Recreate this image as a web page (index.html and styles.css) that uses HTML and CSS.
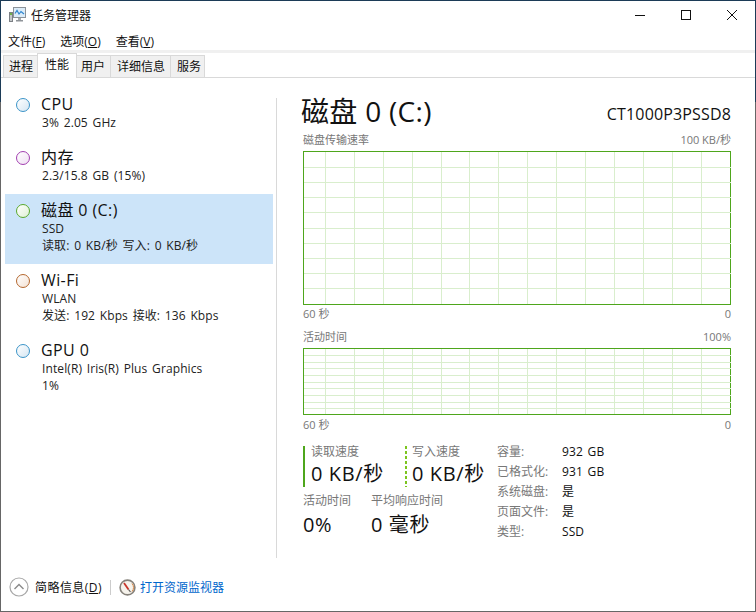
FILE: index.html
```html
<!DOCTYPE html>
<html lang="zh-CN">
<head>
<meta charset="utf-8">
<title>任务管理器</title>
<link rel="stylesheet" href="styles.css">
</head>
<body>
<div class="window">
  <header class="titlebar">
    <svg class="appicon" width="18" height="16" viewBox="0 0 18 16">
      <rect x="0.5" y="5.5" width="3" height="9" fill="#c4c8ca" stroke="#7c8085"/>
      <rect x="1" y="6" width="2" height="2" fill="#6fb04a"/>
      <rect x="4.5" y="0.5" width="12" height="10" fill="#dcecf8" stroke="#8b9299"/>
      <path d="M6 6.5 L8 3.5 L10 7 L12 4.5 L15 7" fill="none" stroke="#2e86d0" stroke-width="1.2"/>
      <rect x="9" y="11" width="3" height="2" fill="#a6abaf"/>
      <rect x="7" y="13" width="7" height="1.5" fill="#8f9499"/>
    </svg>
    <span class="title">任务管理器</span>
    <div class="winbtns">
      <svg width="46" height="16" viewBox="0 0 46 16"><path d="M18 8.5H28" stroke="#111"/></svg>
      <svg width="46" height="16" viewBox="0 0 46 16"><rect x="18.5" y="3.5" width="9" height="9" fill="none" stroke="#111"/></svg>
      <svg width="46" height="16" viewBox="0 0 46 16"><path d="M18 3L28 13M28 3L18 13" stroke="#111" fill="none"/></svg>
    </div>
  </header>
  <nav class="menubar">
    <span>文件(<u>F</u>)</span><span>选项(<u>O</u>)</span><span>查看(<u>V</u>)</span>
  </nav>
  <div class="tabs">
    <span class="tab">进程</span><span class="tab active">性能</span><span class="tab tab-users">用户</span><span class="tab tab-details">详细信息</span><span class="tab tab-services">服务</span>
  </div>
  <main class="content">
    <aside class="sidebar">
      <div class="item short">
        <i class="dot blue"></i>
        <div><div class="name">CPU</div><div class="sub">3% 2.05 GHz</div></div>
      </div>
      <div class="item short">
        <i class="dot purple"></i>
        <div><div class="name">内存</div><div class="sub">2.3/15.8 GB (15%)</div></div>
      </div>
      <div class="item selected">
        <i class="dot green"></i>
        <div><div class="name">磁盘 0 (C:)</div><div class="sub">SSD</div><div class="sub">读取: 0 KB/秒 写入: 0 KB/秒</div></div>
      </div>
      <div class="item">
        <i class="dot orange"></i>
        <div><div class="name">Wi-Fi</div><div class="sub">WLAN</div><div class="sub">发送: 192 Kbps 接收: 136 Kbps</div></div>
      </div>
      <div class="item">
        <i class="dot blue"></i>
        <div><div class="name">GPU 0</div><div class="sub">Intel(R) Iris(R) Plus Graphics</div><div class="sub">1%</div></div>
      </div>
    </aside>
    <div class="divider"></div>
    <section class="detail">
      <div class="heading"><h1>磁盘 0 (C:)</h1><span class="model">CT1000P3PSSD8</span></div>
      <div class="caption cap1"><span>磁盘传输速率</span><span>100 KB/秒</span></div>
      <div class="chart chart-big">
        <svg class="grid" width="427" height="152" viewBox="0 0 427 152">
          <path d="M21.5 0V152M50.5 0V152M79.5 0V152M108.5 0V152M137.5 0V152M165.5 0V152M194.5 0V152M223.5 0V152M252.5 0V152M281.5 0V152M310.5 0V152M339.5 0V152M368.5 0V152M397.5 0V152M0 15.5H427M0 30.5H427M0 45.5H427M0 60.5H427M0 76.5H427M0 91.5H427M0 106.5H427M0 121.5H427M0 136.5H427" fill="none" stroke="#d9eecd"/>
        </svg>
      </div>
      <div class="caption cap-b1"><span>60 秒</span><span>0</span></div>
      <div class="caption cap2"><span>活动时间</span><span>100%</span></div>
      <div class="chart chart-small">
        <svg class="grid" width="427" height="65" viewBox="0 0 427 65">
          <path d="M21.5 0V65M50.5 0V65M79.5 0V65M108.5 0V65M137.5 0V65M165.5 0V65M194.5 0V65M223.5 0V65M252.5 0V65M281.5 0V65M310.5 0V65M339.5 0V65M368.5 0V65M397.5 0V65M0 6.5H427M0 13.5H427M0 19.5H427M0 26.5H427M0 33.5H427M0 39.5H427M0 46.5H427M0 53.5H427M0 59.5H427" fill="none" stroke="#d9eecd"/>
        </svg>
      </div>
      <div class="caption cap-b2"><span>60 秒</span><span>0</span></div>
      <div class="stats">
        <div class="stat-left">
          <div class="speeds">
            <div class="speed read"><div class="label">读取速度</div><div class="value">0 KB/秒</div></div>
            <div class="speed write"><div class="label">写入速度</div><div class="value">0 KB/秒</div></div>
          </div>
          <div class="speeds lower">
            <div class="metric m1"><div class="label">活动时间</div><div class="value">0%</div></div>
            <div class="metric"><div class="label">平均响应时间</div><div class="value">0 毫秒</div></div>
          </div>
        </div>
        <dl class="props">
          <dt>容量:</dt><dd>932 GB</dd>
          <dt>已格式化:</dt><dd>931 GB</dd>
          <dt>系统磁盘:</dt><dd>是</dd>
          <dt>页面文件:</dt><dd>是</dd>
          <dt>类型:</dt><dd>SSD</dd>
        </dl>
      </div>
    </section>
  </main>
  <footer class="footer">
    <svg class="chev" width="20" height="20" viewBox="0 0 20 20"><circle cx="10" cy="10" r="9" fill="#fff" stroke="#a8a8a8" stroke-width="1.2"/><path d="M5.5 12L10 7.5L14.5 12" fill="none" stroke="#8a8a8a" stroke-width="1.4"/></svg>
    <span class="brief">简略信息(<u>D</u>)</span>
    <span class="sep"></span>
    <svg class="gauge" width="17" height="17" viewBox="0 0 17 17"><circle cx="8.5" cy="8.5" r="7.4" fill="#f6f3ec" stroke="#85817a" stroke-width="1.6"/><path d="M13 4.5A6 6 0 0 1 13 12.5" fill="none" stroke="#d98a4a" stroke-width="1"/><path d="M5 4L9.5 10.5" stroke="#c8352a" stroke-width="1.8"/><path d="M9.5 10.5L11.5 13" stroke="#555" stroke-width="1.2"/></svg>
    <span class="link">打开资源监视器</span>
  </footer>
</div>
</body>
</html>
```
FILE: styles.css
```css
* { box-sizing: border-box; }
html, body { margin: 0; padding: 0; }
body {
  width: 756px; height: 612px; overflow: hidden; background: #fff;
  font-family: "Open Sans", "Noto Sans CJK SC", sans-serif;
  font-size: 12px; color: #111;
}
.window {
  width: 756px; height: 612px; display: flex; flex-direction: column;
  border: 1px solid #666;
  border-image: linear-gradient(#1c3b57 0, #1c3b57 102px, #666 102px) 1;
  background: #fff;
}
.titlebar { height: 28px; display: flex; align-items: center; padding-left: 8px; flex: none; }
.appicon { margin-right: 4px; }
.title { font-size: 12px; flex: 1; }
.winbtns { display: flex; align-items: center; }
.menubar { height: 21px; display: flex; gap: 15px; padding: 3px 7px 0; align-items: center; flex: none; }
.tabs { height: 28px; flex: none; display: flex; align-items: flex-end; padding-left: 2px; border-top: 3px solid #f0f0f0; border-bottom: 1px solid #d9d9d9; }
.tab { height: 22px; padding: 0 4px 0 5px; line-height: 21px; background: #f0f0f0; border: 1px solid #d9d9d9; border-bottom: none; margin-left: -1px; font-size: 12px; }
.tab:first-child { margin-left: 0; }
.tab-users { padding: 0 5px 0 4px; }
.tab-details { padding: 0 5px 0 6px; }
.tab-services { padding: 0 3px 0 6px; }
.tab.active { height: 25px; background: #fff; line-height: 22px; position: relative; top: 1px; padding: 0 7px; z-index: 1; }
.content { height: 485px; flex: none; display: flex; }
.sidebar { width: 268px; margin: 10px 3px 0 4px; flex: none; }
.item { height: 70px; display: flex; padding: 6px 0 0 11px; gap: 11px; }
.item.short { height: 53px; }
.item.selected { background: #cce4f9; }
.dot { width: 14px; height: 14px; border-radius: 50%; border: 1px solid; margin-top: 4px; flex: none; }
.blue { border-color: #3b94c8; background: linear-gradient(135deg, #fff, #d5e6f3); }
.purple { border-color: #a23fb0; background: linear-gradient(135deg, #fff, #f0dff3); }
.green { border-color: #5aa92c; background: linear-gradient(135deg, #fff, #dff0d5); }
.orange { border-color: #b4672e; background: linear-gradient(135deg, #fff, #f4e2d4); }
.name { font-size: 16px; line-height: 20px; letter-spacing: .4px; }
.sub { font-size: 12px; line-height: 17px; white-space: nowrap; color: #222; margin-left: 1px; letter-spacing: .1px; word-spacing: 1.5px; }
.divider { width: 1px; margin: 20px 0 5px; background: #d9d9d9; flex: none; }
.detail { flex: 1; padding: 15px 24px 0 26px; min-width: 0; }
.heading { display: flex; justify-content: space-between; align-items: flex-end; height: 36px; }
h1 { font-size: 28px; font-weight: 400; margin: 0 0 0 -2px; line-height: 36px; letter-spacing: .3px; }
.model { font-size: 16px; line-height: 30px; letter-spacing: .15px; }
.caption { display: flex; justify-content: space-between; font-size: 11px; line-height: 16px; color: #777; }
.cap1 { margin-top: 3px; margin-bottom: 3px; }
.cap-b1 { margin-top: 1px; }
.cap2 { margin-top: 7px; margin-bottom: 3px; }
.cap-b2 { margin-top: 2px; }
.chart { border: 1px solid #4ea61c; background-color: #fff; }
.chart-big { height: 154px; }
.chart-small { height: 67px; }
.grid { display: block; }
.stats { display: flex; margin-top: 8px; }
.stat-left { width: 194px; flex: none; padding-top: 5px; }
.speeds { display: flex; }
.speed { width: 102px; height: 41px; flex: none; white-space: nowrap; }
.read { border-left: 2px solid #4ea61c; padding-left: 6px; }
.write { padding-left: 7px; background: repeating-linear-gradient(#7cc520 0, #7cc520 3px, transparent 3px, transparent 5px) left top / 2px 100% no-repeat; }
.label { font-size: 12px; line-height: 12px; color: #777; white-space: nowrap; }
.value { font-size: 20px; line-height: 26px; margin-top: 3px; white-space: nowrap; letter-spacing: .6px; }
.lower { margin-top: 8px; }
.lower .value { margin-top: 5px; }
.metric.m1 { width: 68px; }
.props { display: grid; grid-template-columns: 65px auto; grid-auto-rows: 20px; margin: 0; align-items: center; align-content: start; }
.props dt { color: #777; font-size: 12px; white-space: nowrap; }
.props dd { margin: 0; font-size: 12px; letter-spacing: .1px; word-spacing: 1.5px; }
.footer { height: 48px; flex: none; display: flex; align-items: center; padding-left: 8px; }
.brief { margin-left: 6px; letter-spacing: .45px; }
.sep { width: 1px; height: 15px; background: #ccc; margin: 0 8px; }
.link { color: #0066cc; margin-left: 4px; }
```
